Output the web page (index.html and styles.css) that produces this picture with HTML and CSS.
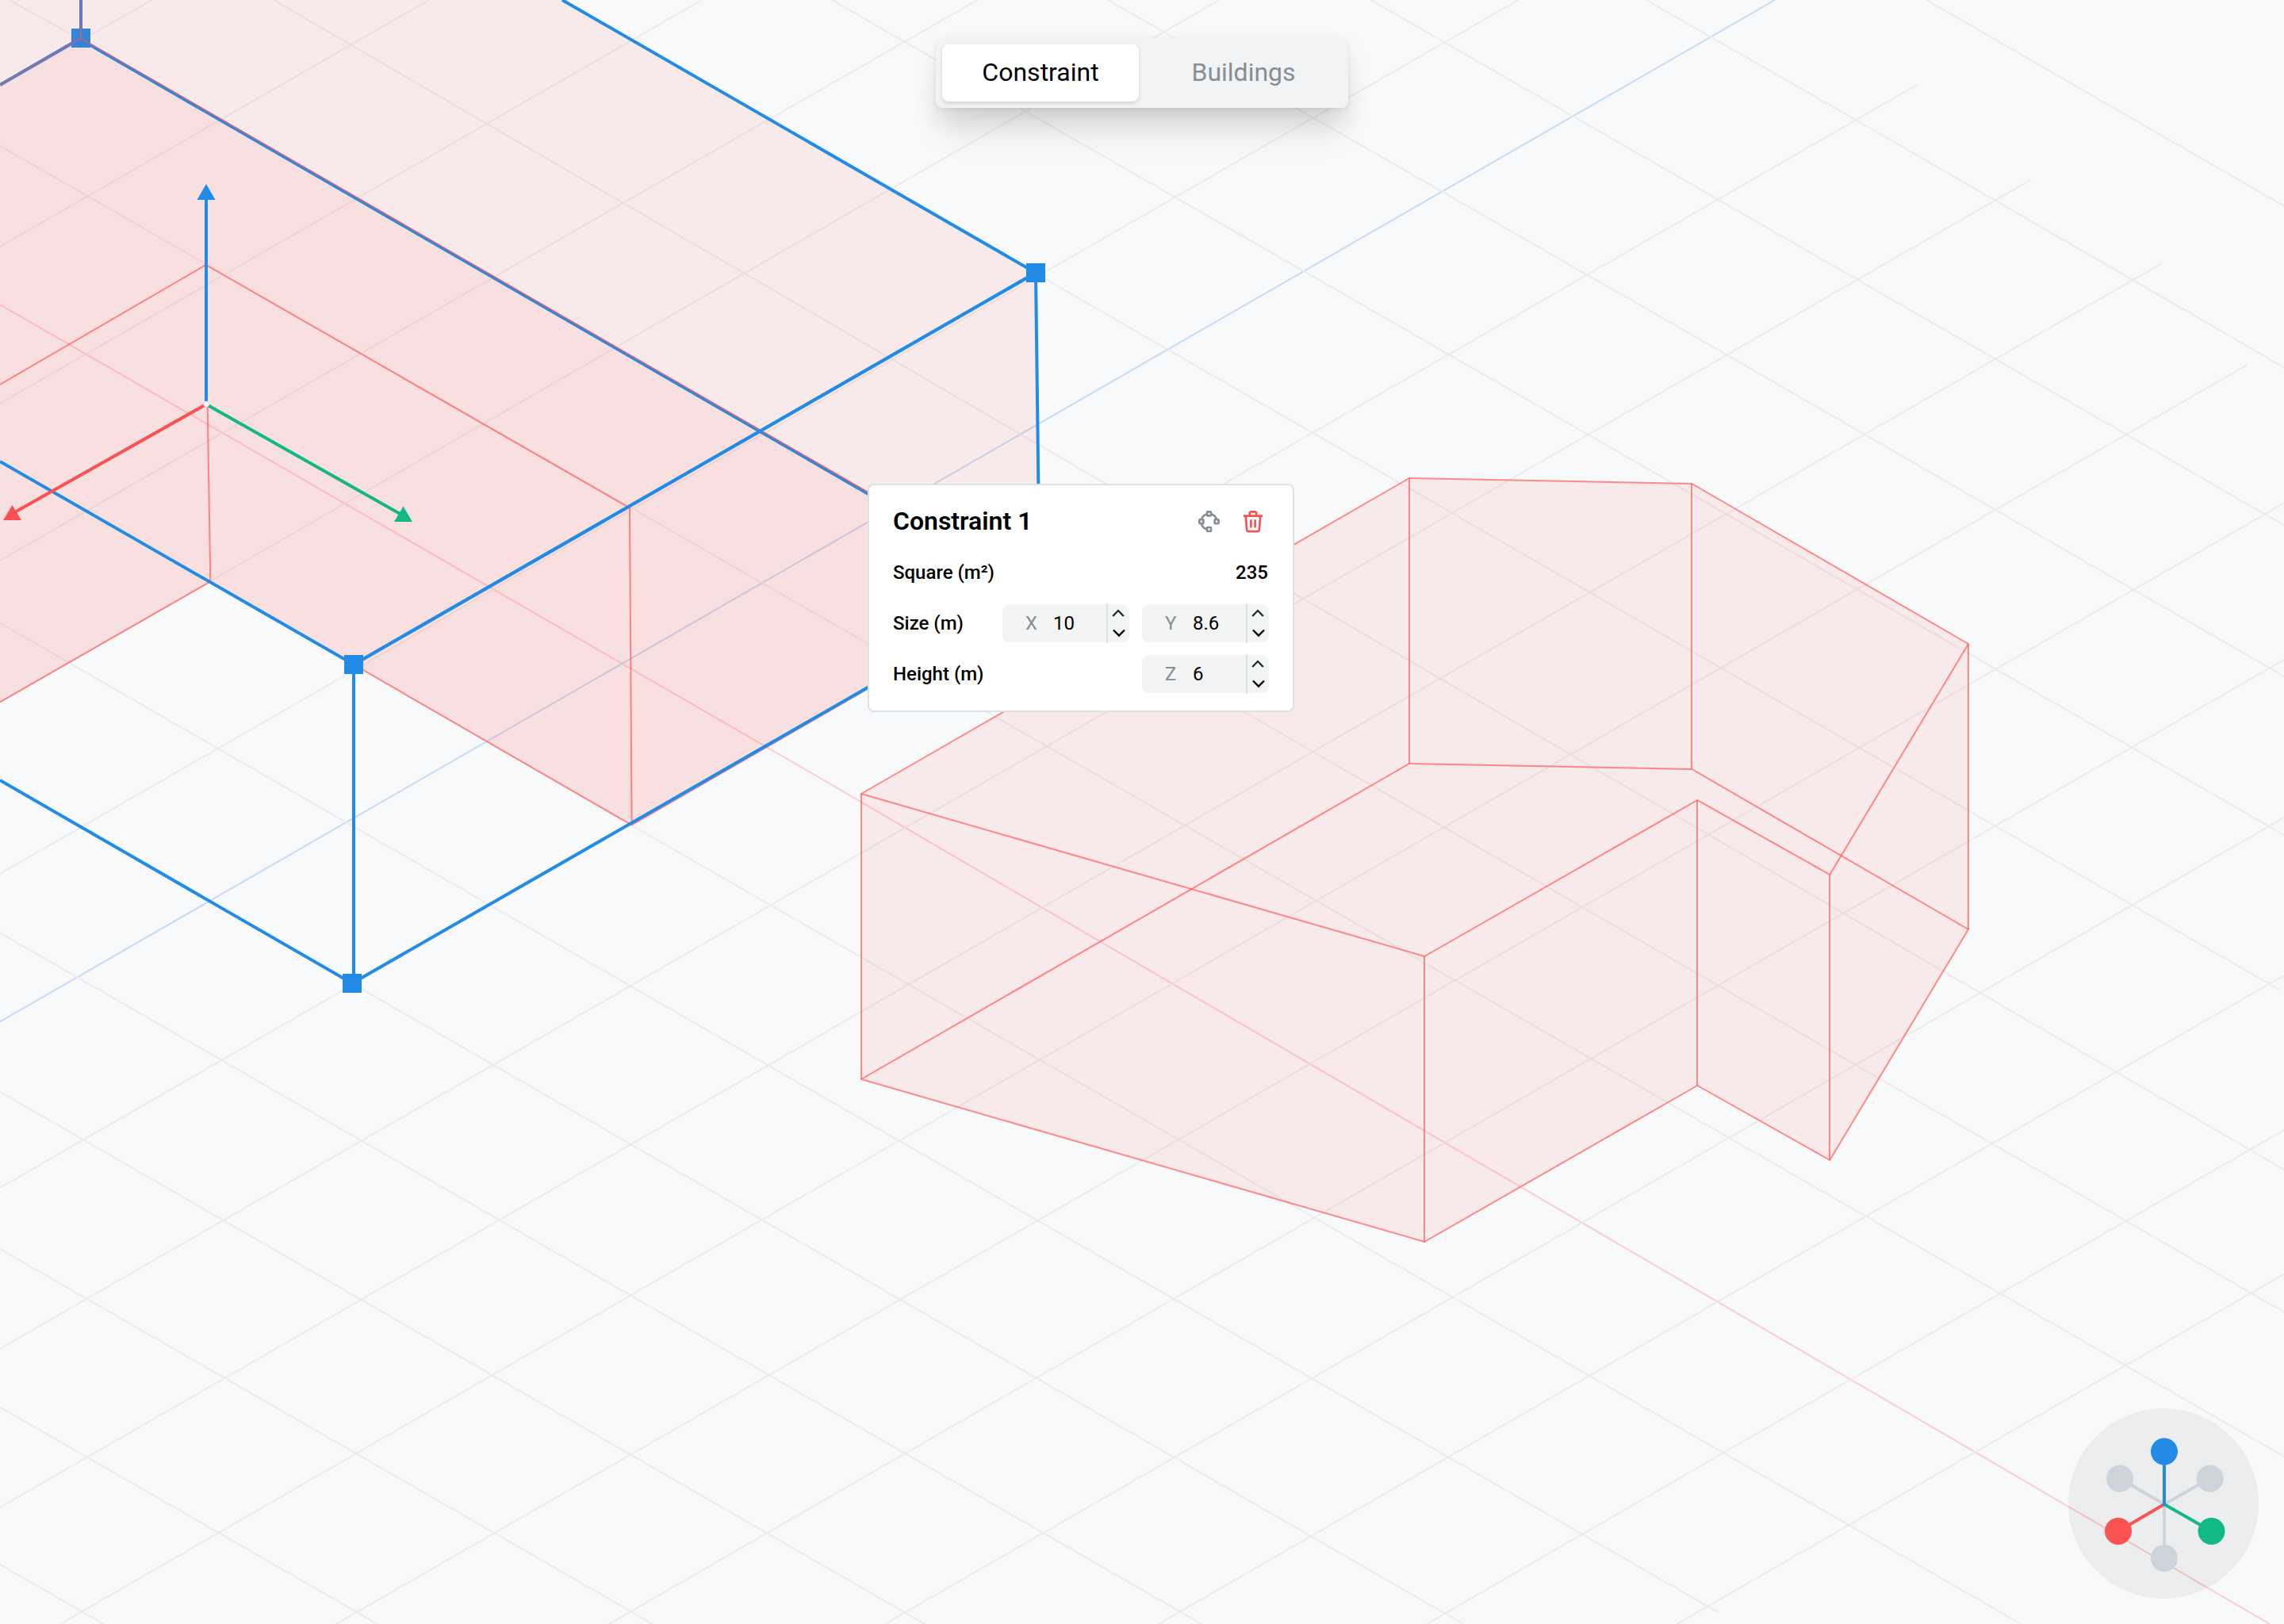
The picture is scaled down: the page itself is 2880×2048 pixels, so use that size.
FILE: index.html
```html
<!DOCTYPE html>
<html lang="en">
<head>
<meta charset="utf-8">
<title>Constraint editor</title>
<link rel="stylesheet" href="styles.css">
</head>
<body>
<main class="stage">
  <svg class="scene" viewBox="0 0 2880 2048" aria-hidden="true">
    <!-- world axes -->
    <path class="axis axis-x" d="M0 384L1000 961.3L2862 2048"/>
    <path class="axis axis-y" d="M0 1288.4L2238 0"/>
    <!-- ground grid -->
    <g class="grid">
      <path d="M2429.3 0L2880 259.7"/>
      <path d="M2075.5 0L2339.7 151L2880 463.3"/>
      <path d="M1728.6 0L2342 352.6L2880 662.3"/>
      <path d="M1397.1 0L2177.1 447.4L2880 853"/>
      <path d="M1048.9 0L2002.5 548L2880 1053"/>
      <path d="M707 0L1306 345L1831 647L2874 1248"/>
      <path d="M345 0L938.5 344.6L1815.9 855.6L2880 1475"/>
      <path d="M11.7 0L102 50L1572.7 900L2880 1654.7"/>
      <path d="M0 184L960.5 734.8L1834.8 1236.4L2880 1836.7"/>
      <path d="M0 582L795 1040L1486 1437L2548.4 2048"/>
      <path d="M0 785.7L795.4 1243.7L2167 2033.7"/>
      <path d="M0 984L795.5 1443.1L1845 2048"/>
      <path d="M0 1176.3L795.5 1633.9L1515 2048"/>
      <path d="M0 1376.8L1166 2048"/>
      <path d="M0 1575L823 2048"/>
      <path d="M0 1774.6L476 2048"/>
      <path d="M0 1973L130.5 2048"/>
      <path d="M191.8 0L0 109"/>
      <path d="M540.8 0L0 311"/>
      <path d="M885 0L0 509"/>
      <path d="M1232.6 0L785.9 255.8L0 707"/>
      <path d="M1537.4 0L938.5 344.6L265 733L0 885"/>
      <path d="M1914.5 0L1309 348L701 697L440 849L0 1101.8"/>
      <path d="M2418.7 106.1L1654.8 546L795 1040L0 1498"/>
      <path d="M2560.2 227L1831 647L972.6 1141L0 1701"/>
      <path d="M2725 332.7L1815.9 855.6L968.8 1343.3L0 1901"/>
      <path d="M2833.4 460.2L1980.5 951.3L1134.6 1438L76 2048"/>
      <path d="M2880 634.5L1834.8 1236.4L424 2048"/>
      <path d="M2880 832L1822 1440.8L768 2048"/>
      <path d="M2880 1031L1995 1541.8L1116 2048"/>
      <path d="M2880 1230L2165.7 1641.7L1461 2048"/>
      <path d="M2880 1425L2173.4 1832L1799 2048"/>
      <path d="M2880 1606.7L2114.7 2048"/>
    </g>
    <!-- selected volume: fills, edges and selection frame -->
    <path class="volume" d="M0 0H709L1306 344L1310 743L796.6 1040L265 733.5L0 885.5Z"/>
    <path class="volume-inner" d="M0 107L102 48L1310 745L796.6 1040L265 733.5L0 885.5Z"/>
    <path class="edge" d="M0 485L259.5 334L794 640.6L796.6 1040M261.7 512L265.3 733.5L0 885.5M265 733.5L446 838L796.6 1040.5L1310 744"/>
    <path class="frame" d="M102 0V48L0 107M102 50L1310 747M709 0L1306 344L446 838L0 582M446 838V1240M0 984L444 1240L1311 742.5L1306 344"/>
    <g class="handle">
      <rect class="handle-back" x="90" y="36" width="24" height="24"/>
      <rect x="1294" y="332" width="24" height="24"/>
      <rect x="434" y="826" width="24" height="24"/>
      <rect x="432" y="1228" width="24" height="24"/>
    </g>
    <path class="edge" d="M102 0V48L0 107M102 48.5L1310 745"/>
    <path class="frame" d="M1306 344L446 838"/>
    <!-- second volume -->
    <path class="volume" d="M1777 603L2133.5 610L2482 812V1172L2307.3 1463L2140.3 1369L1796.3 1566L1086 1361V1001Z"/>
    <g class="edge">
      <path d="M1777 603L2133.5 610L2482 812L2307.3 1103L2140.3 1009L1796.3 1206L1086 1001Z"/>
      <path d="M1777 963L2133.5 970L2482 1172L2307.3 1463L2140.3 1369L1796.3 1566L1086 1361Z"/>
      <path d="M1777 603V963M2133 610V970M2482 812V1172M2307 1103V1463M2140 1009V1369M1796 1206V1566M1086 1001V1361"/>
    </g>
    <!-- move gizmo -->
    <g class="gizmo">
      <path class="blue" d="M260 508V248"/>
      <path class="red" d="M258 511L15 648"/>
      <path class="green" d="M262 511L508 650"/>
      <path class="blue-fill" d="M260 232L271.5 252H248.5Z"/>
      <path class="red-fill" d="M15.5 637L27 656H4Z"/>
      <path class="green-fill" d="M508.5 638.5L520 658H497Z"/>
      <circle class="origin" cx="260.2" cy="509.5" r="3"/>
    </g>
    <!-- view compass -->
    <g class="compass">
      <circle class="disc" cx="2728" cy="1896" r="120"/>
      <path class="gray" d="M2673 1864.5L2729 1897L2786.7 1864.5M2729 1897V1965"/>
      <path class="red" d="M2729 1897L2671 1931"/>
      <path class="green" d="M2729 1897L2788.5 1931"/>
      <path class="blue" d="M2729 1899V1830"/>
      <circle class="gray-fill" cx="2673" cy="1864.5" r="17"/>
      <circle class="gray-fill" cx="2786.7" cy="1864.5" r="17"/>
      <circle class="gray-fill" cx="2729" cy="1965" r="17"/>
      <circle class="blue-fill" cx="2729" cy="1830.5" r="17"/>
      <circle class="red-fill" cx="2671" cy="1931" r="17"/>
      <circle class="green-fill" cx="2788.5" cy="1931" r="17"/>
    </g>
  </svg>

  <nav class="tabs">
    <button class="tab tab-active">Constraint</button>
    <button class="tab">Buildings</button>
  </nav>

  <section class="panel">
    <header class="row">
      <h1 class="title">Constraint 1</h1>
      <div class="actions">
        <svg class="icon icon-nodes" viewBox="0 0 27 28">
          <rect x="11" y="1.4" width="5" height="5" rx=".8"/>
          <rect x="1.4" y="11.2" width="5" height="5" rx=".8"/>
          <rect x="20.6" y="11.2" width="5" height="5" rx=".8"/>
          <rect x="11" y="21" width="5" height="5" rx=".8"/>
          <path d="M11 4.3Q5.2 6 4.2 11M16.3 4.3Q21.8 6 22.9 11M4.2 16.5Q5.2 22 11 23.5"/>
        </svg>
        <svg class="icon icon-trash" viewBox="0 0 24 28">
          <path d="M0 6.7H24M7.8 6.5V3.3Q7.8 1.4 9.7 1.4H14.3Q16.2 1.4 16.2 3.3V6.5M2.8 7L4.1 24Q4.3 26.2 6.3 26.2H17.7Q19.7 26.2 19.9 24L21.2 7M9.4 11.3V21.5M14.6 11.3V21.5"/>
        </svg>
      </div>
    </header>
    <div class="row">
      <span class="label">Square (m²)</span>
      <span class="label total">235</span>
    </div>
    <div class="row">
      <span class="label">Size (m)</span>
      <div class="fields">
        <div class="field"><span class="axis-name">X</span><span class="value">10</span>
          <span class="stepper"><svg viewBox="0 0 16 8"><path d="M1.2 7L8 0L14.8 7"/></svg><svg class="down" viewBox="0 0 16 8"><path d="M1 .5L8 7.5L15 .5"/></svg></span></div>
        <div class="field"><span class="axis-name">Y</span><span class="value">8.6</span>
          <span class="stepper"><svg viewBox="0 0 16 8"><path d="M1.2 7L8 0L14.8 7"/></svg><svg class="down" viewBox="0 0 16 8"><path d="M1 .5L8 7.5L15 .5"/></svg></span></div>
      </div>
    </div>
    <div class="row">
      <span class="label">Height (m)</span>
      <div class="fields">
        <div class="field"><span class="axis-name">Z</span><span class="value">6</span>
          <span class="stepper"><svg viewBox="0 0 16 8"><path d="M1.2 7L8 0L14.8 7"/></svg><svg class="down" viewBox="0 0 16 8"><path d="M1 .5L8 7.5L15 .5"/></svg></span></div>
      </div>
    </div>
  </section>
</main>
</body>
</html>
```
FILE: styles.css
```css
* { box-sizing: border-box; }

body {
  margin: 0;
  background: #f8f9fb;
  font-family: Roboto, "Liberation Sans", sans-serif;
  color: #000;
}

.stage {
  position: relative;
  width: 2880px;
  height: 2048px;
  overflow: hidden;
}

.scene { display: block; width: 2880px; height: 2048px; fill: none; }

.axis { stroke-width: 2; }
.axis-x { stroke: #fbcfcf; }
.axis-y { stroke: #c3ddf6; }
.grid { stroke: #ececee; stroke-width: 2; }

.volume { fill: rgba(255, 88, 82, .094); }
.volume-inner { fill: rgba(250, 92, 78, .066); }
.edge { stroke: rgba(255, 82, 82, .65); stroke-width: 2; stroke-linejoin: round; }
.frame { stroke: #228be6; stroke-width: 4; }
.handle { fill: #228be6; }
.handle-back { fill: #3385dc; }

.gizmo, .compass { stroke-width: 4; }
.blue { stroke: #228be6; }
.red { stroke: #fa5252; }
.green { stroke: #12b886; }
.gray { stroke: #ced4dc; }
.blue-fill { fill: #228be6; stroke: none; }
.red-fill { fill: #fa5252; stroke: none; }
.green-fill { fill: #12b886; stroke: none; }
.gray-fill { fill: #ced4dc; stroke: none; }
.origin { fill: #fff; stroke: #e3e8f2; stroke-width: 1.5; }
.disc { fill: rgba(20, 10, 0, .05); }

.tabs {
  position: absolute;
  top: 48px;
  left: 1180px;
  display: flex;
  gap: 8px;
  width: 520px;
  height: 88px;
  padding: 8px;
  border-radius: 8px;
  background: #f1f3f5;
  box-shadow: 0 42px 42px -12px rgba(40, 44, 30, .1), 0 16px 32px -4px rgba(40, 44, 30, .13), 0 2px 6px rgba(0, 0, 0, .06);
}

.tab {
  flex: 1;
  padding: 0 0 2px;
  border: 0;
  border-radius: 8px;
  background: none;
  font: 400 32px/70px Roboto, "Liberation Sans", sans-serif;
  color: #868e96;
}

.tab-active {
  background: #fff;
  color: #000;
  box-shadow: 0 2px 4px rgba(0, 0, 0, .14);
}

.panel {
  position: absolute;
  top: 610px;
  left: 1094px;
  display: flex;
  flex-direction: column;
  gap: 16px;
  width: 538px;
  height: 288px;
  padding: 22px 30px;
  border: 2px solid #dee2e6;
  border-radius: 8px;
  background: #fff;
}

.row {
  display: flex;
  align-items: center;
  justify-content: space-between;
  height: 48px;
}

.title { margin: 0; padding-bottom: 2px; font-size: 32px; font-weight: 600; line-height: 46px; }
.label { font-size: 24px; font-weight: 500; line-height: 48px; }
.total { padding-right: 1px; }

.actions { display: flex; align-items: center; gap: 30px; padding-right: 8px; }
.icon { display: block; height: 28px; fill: none; stroke-width: 2.7; }
.icon-nodes { width: 27px; stroke: #868e96; }
.icon-trash { width: 24px; stroke: #fa5252; }

.fields { display: flex; gap: 16px; }

.field {
  display: flex;
  align-items: center;
  width: 160px;
  height: 48px;
  border-radius: 8px;
  background: #f3f4f4;
  font-size: 24px;
  line-height: 48px;
}

.axis-name { width: 35px; margin-left: 29px; color: #868e96; }
.value { flex: 1; }

.stepper {
  display: flex;
  flex-direction: column;
  align-items: center;
  justify-content: space-between;
  width: 29px;
  height: 50px;
  padding: 9px 3px 9px 4px;
  border-left: 2px solid #dee2e6;
}

.stepper svg { width: 16px; height: 8px; margin-right: 2px; overflow: visible; fill: none; stroke: #212529; stroke-width: 2.2; }
.stepper .down { margin-right: 0; stroke: #000; stroke-width: 2.4; }
```
